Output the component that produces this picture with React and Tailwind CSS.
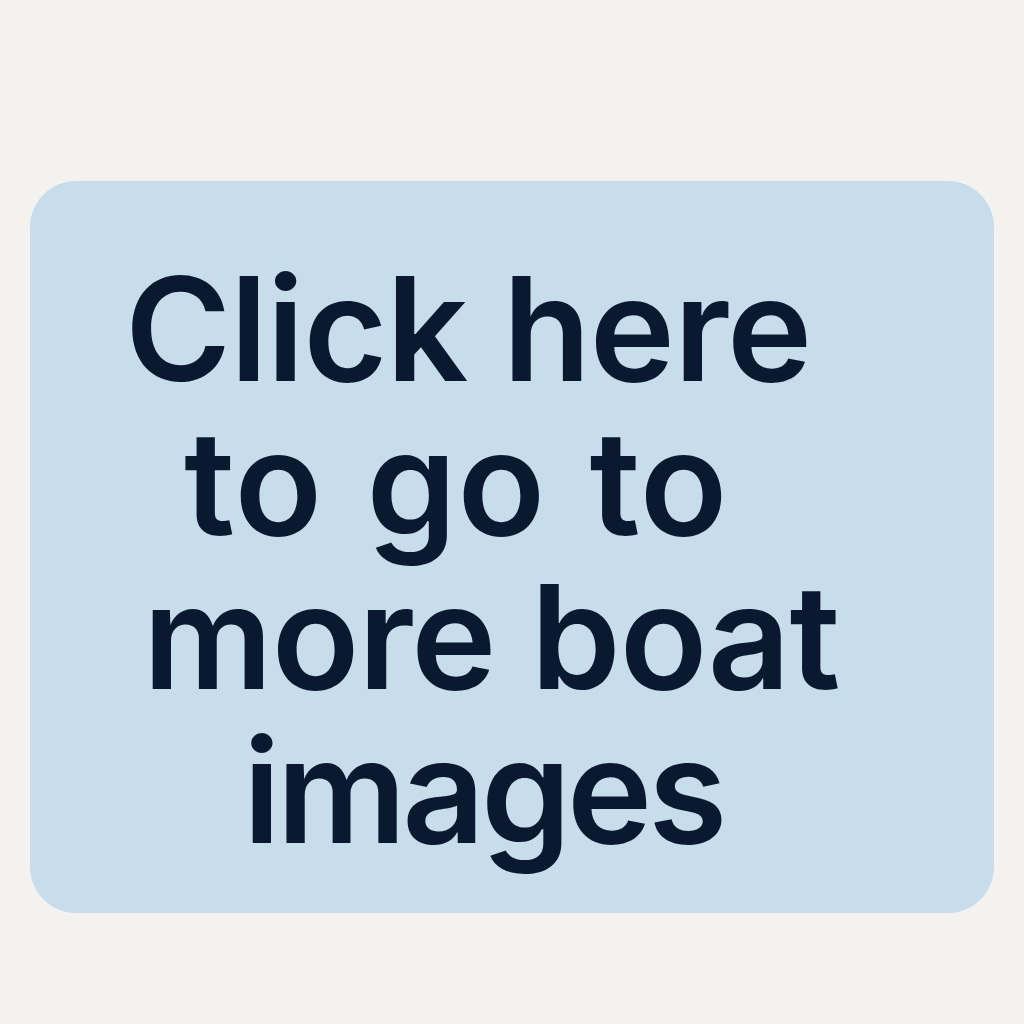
export default function App() {
  return (
    <div className="w-[1024px] h-[1024px] bg-[#f3f2ef] pt-[181px] pl-[30px]">
      <a
        href="#"
        className="block w-[964px] h-[732px] rounded-[46px] bg-[#c8ddec] pt-[71px] text-[#0a1830] no-underline"
        style={{ fontFamily: 'Inter, "Noto Sans", sans-serif' }}
      >
        <div className="text-[144px] leading-[154px] font-semibold tracking-[-1px] whitespace-nowrap">
          <div className="ml-[95px]">Click here</div>
          <div className="ml-[154px] tracking-[1px] [word-spacing:6px]">to go to</div>
          <div className="ml-[113px]">more boat</div>
          <div className="ml-[213px] tracking-[-4px]">images</div>
        </div>
      </a>
    </div>
  );
}
